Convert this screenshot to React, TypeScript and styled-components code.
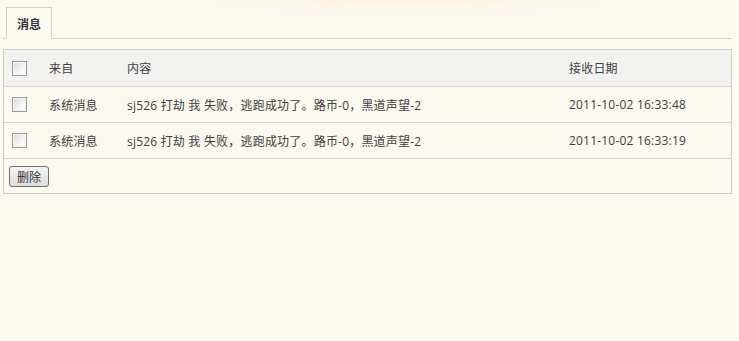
import { createGlobalStyle } from "styled-components";
import styled from "styled-components";

type Message = { id: number; from: string; content: string; date: string };

const messages: Message[] = [
  {
    id: 1,
    from: "系统消息",
    content: "sj526 打劫 我 失败，逃跑成功了。路币-0，黑道声望-2",
    date: "2011-10-02 16:33:48",
  },
  {
    id: 2,
    from: "系统消息",
    content: "sj526 打劫 我 失败，逃跑成功了。路币-0，黑道声望-2",
    date: "2011-10-02 16:33:19",
  },
];

export default function App() {
  return (
    <>
      <GlobalStyle />
      <Page>
        <TabBar>
          <Tab>消息</Tab>
        </TabBar>
        <Table>
          <Row $head>
            <Cell>
              <Check type="checkbox" />
            </Cell>
            <Cell>来自</Cell>
            <Cell>内容</Cell>
            <Cell>接收日期</Cell>
          </Row>
          {messages.map((m) => (
            <Row key={m.id}>
              <Cell>
                <Check type="checkbox" />
              </Cell>
              <Cell>{m.from}</Cell>
              <Cell>{m.content}</Cell>
              <Cell>{m.date}</Cell>
            </Row>
          ))}
          <Footer>
            <Button type="button">删除</Button>
          </Footer>
        </Table>
      </Page>
    </>
  );
}

const GlobalStyle = createGlobalStyle`
  html, body {
    margin: 0;
    background: #fcf9f0;
  }
  body {
    font-family: "Open Sans", "Noto Sans CJK SC", sans-serif;
    font-size: 12px;
    color: #404040;
  }
`;

const Page = styled.div`
  min-height: 341px;
  padding: 7px 7px 0 3px;
  box-sizing: border-box;
  background:
    radial-gradient(ellipse 200px 12px at 410px 0, #fdf3dc 0%, rgba(253, 243, 220, 0) 100%),
    #fcf9f0;
`;

const TabBar = styled.div`
  display: flex;
  padding-left: 3px;
  border-bottom: 1px solid #d3d0c8;
  margin-bottom: 10px;
`;

const Tab = styled.div`
  width: 44px;
  height: 30px;
  margin-bottom: -1px;
  border: 1px solid #d3d0c8;
  border-bottom-color: #fcf9f0;
  background: #fcf9f0;
  display: flex;
  align-items: center;
  justify-content: center;
  font-family: "Noto Sans CJK SC", sans-serif;
  font-weight: bold;
  color: #333;
`;

const Table = styled.div`
  border: 1px solid #cfccc6;
`;

const Row = styled.div<{ $head?: boolean }>`
  display: grid;
  grid-template-columns: 45px 78px 442px 1fr;
  align-items: center;
  height: ${(p) => (p.$head ? "36px" : "35px")};
  border-bottom: 1px solid #d6d3cc;
  background: ${(p) => (p.$head ? "#f2f2f1" : "transparent")};
`;

const Cell = styled.div`
  white-space: nowrap;
  letter-spacing: 0.2px;
  &:first-child {
    padding-left: 8px;
    display: flex;
    align-items: center;
  }
`;

const Check = styled.input`
  appearance: none;
  margin: 0;
  width: 15px;
  height: 15px;
  box-sizing: border-box;
  border: 1px solid #9a9a9a;
  background: linear-gradient(135deg, #d8d8d8 0%, #f6f6f6 60%, #ffffff 100%);
  box-shadow: inset 0 0 0 1px #f4f4f4;
`;

const Footer = styled.div`
  height: 34px;
  display: flex;
  align-items: center;
  padding-left: 5px;
  padding-top: 1px;
  box-sizing: border-box;
`;

const Button = styled.button`
  width: 40px;
  height: 21px;
  padding: 0;
  font-family: "Noto Sans CJK SC", sans-serif;
  font-size: 12px;
  color: #333;
  border: 1px solid #707070;
  border-radius: 3px;
  background: linear-gradient(#f4f4f4, #dedede);
`;
